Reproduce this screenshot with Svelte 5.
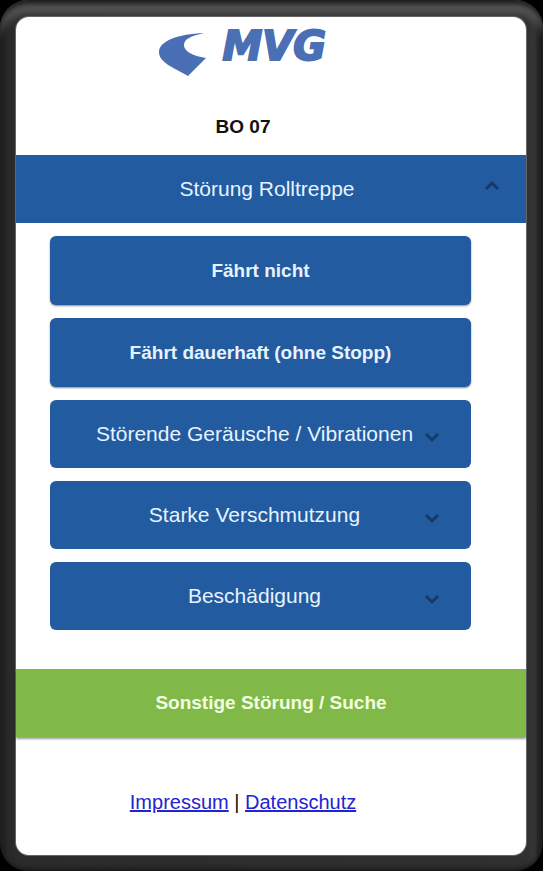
<script>
	const faults = ['Fährt nicht', 'Fährt dauerhaft (ohne Stopp)']
	const groups = ['Störende Geräusche / Vibrationen', 'Starke Verschmutzung', 'Beschädigung']

	let open = $state(true)
	let openGroup = $state('')

	/** @param {string} name */
	function toggleGroup(name) {
		openGroup = openGroup === name ? '' : name
	}
</script>

{#snippet chevron(up)}
	<svg class="chevron" class:up viewBox="0 0 16 24" aria-hidden="true">
		<path d="M2 12l6 6 6-6" />
	</svg>
{/snippet}

<div class="device">
	<main class="screen">
		<header>
			<svg class="logo" viewBox="0 0 171 44" role="img" aria-label="MVG">
				<path d="M46 0C20 1 1 8 1 19C1 29 14 34 30 43L48 25C34 23 26 18 26 12C26 6 33 3 46 0Z" />
				<text x="168" y="27" text-anchor="end">MVG</text>
			</svg>
			<h1>BO 07</h1>
		</header>

		<button class="bar" aria-expanded={open} onclick={() => (open = !open)}>
			<span>Störung Rolltreppe</span>
			{@render chevron(open)}
		</button>

		{#if open}
			<section class="faults">
				{#each faults as fault}
					<button class="fault">{fault}</button>
				{/each}
				{#each groups as group}
					<button class="group" aria-expanded={openGroup === group} onclick={() => toggleGroup(group)}>
						<span>{group}</span>
						{@render chevron(openGroup === group)}
					</button>
				{/each}
			</section>
		{/if}

		<button class="other">Sonstige Störung / Suche</button>

		<footer>
			<a href="#impressum">Impressum</a> | <a href="#datenschutz">Datenschutz</a>
		</footer>
	</main>
</div>

<style>
	:global(body) {
		background: #000;
		margin: 0;
	}
	.device {
		background: linear-gradient(
			to right,
			#1a1a1a,
			#292929 8px,
			#2b2b2b 16px,
			#303030 calc(100% - 16px),
			#363636 calc(100% - 9px),
			#141414
		);
		border-radius: 28px;
		box-shadow:
			inset 0 6px 5px -2px #1c1c1c,
			inset 0 -4px 5px -2px #161616,
			inset 0 18px 8px -4px #555;
		box-sizing: border-box;
		display: flex;
		font-family: 'Liberation Sans', Arial, sans-serif;
		min-height: 100vh;
		padding: 17px 17px 16px 16px;
	}
	.screen {
		background: #fff;
		border-radius: 13px;
		box-shadow: 0 0 0 1px #666;
		display: flex;
		flex: 1;
		flex-direction: column;
	}
	header {
		align-items: center;
		display: flex;
		flex-direction: column;
		gap: 38px;
		padding: 16px 56px 16px 0;
	}
	.logo {
		fill: #4a6fb5;
		height: 44px;
		overflow: visible;
		width: 171px;
	}
	.logo text {
		font-family: 'DejaVu Sans', sans-serif;
		font-size: 40px;
		font-style: italic;
		font-weight: bold;
		stroke: #4a6fb5;
		stroke-width: 2px;
	}
	h1 {
		color: #111;
		font-size: 19px;
		line-height: 24px;
		margin: 0;
	}
	button {
		background: #225b9f;
		border: none;
		color: #e6f3ff;
		cursor: pointer;
		font: bold 19px/24px 'Liberation Sans', Arial, sans-serif;
		padding: 22px 16px;
	}
	.bar,
	.group {
		align-items: center;
		display: flex;
		font-size: 21px;
		font-weight: normal;
		span {
			flex: 1;
		}
	}
	.bar {
		padding: 22px 26px 22px 34px;
	}
	.faults {
		display: flex;
		flex-direction: column;
		gap: 13px;
		padding: 13px 55px 0 34px;
	}
	.fault,
	.group {
		border-radius: 6px;
	}
	.fault {
		box-shadow: 0 1px 2px #0007;
		padding-top: 23px;
	}
	.group {
		padding: 22px 31px 22px 35px;
	}
	.chevron {
		fill: none;
		height: 24px;
		stroke: #163a68;
		stroke-width: 3px;
		width: 16px;
	}
	.up {
		transform: rotate(180deg);
	}
	.other {
		background: #80b947;
		box-shadow: 0 2px 2px #0006;
		color: #f1ffe0;
		margin-top: 39px;
	}
	footer {
		color: #111;
		font-size: 20px;
		line-height: 24px;
		padding: 53px 56px 40px 0;
		text-align: center;
	}
	a {
		color: #2323d2;
	}
</style>
